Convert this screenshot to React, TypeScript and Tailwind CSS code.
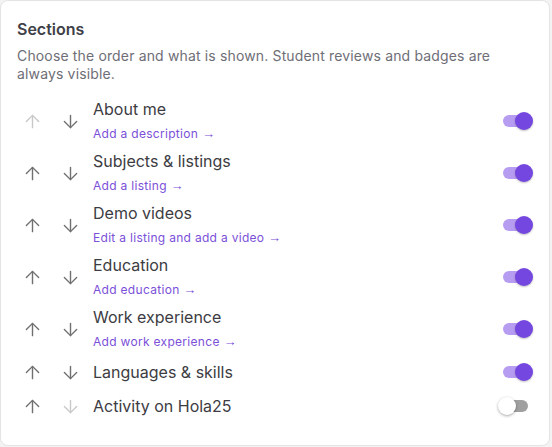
import { ArrowUp, ArrowDown } from 'lucide-react';

type Section = {
  title: string;
  link?: string;
  on: boolean;
};

const sections: Section[] = [
  { title: 'About me', link: 'Add a description', on: true },
  { title: 'Subjects & listings', link: 'Add a listing', on: true },
  { title: 'Demo videos', link: 'Edit a listing and add a video', on: true },
  { title: 'Education', link: 'Add education', on: true },
  { title: 'Work experience', link: 'Add work experience', on: true },
  { title: 'Languages & skills', on: true },
  { title: 'Activity on Hola25', on: false },
];

const Toggle = ({ on }: { on: boolean }) => (
  <div className="relative w-[28px] h-[12px] mr-[2px]">
    <div className={`absolute inset-0 rounded-full ${on ? 'bg-[#b79df1]' : 'bg-[#a0a0a0] right-[3px]'}`} />
    <div
      className={`absolute top-[-3px] w-[18px] h-[18px] rounded-full ${
        on
          ? 'left-[12px] bg-[#7447e0] shadow-[0_1px_2px_rgba(0,0,0,0.25)]'
          : 'left-[-5px] bg-white shadow-[0_1px_3px_rgba(0,0,0,0.35)]'
      }`}
    />
  </div>
);

export default function App() {
  return (
    <div className="min-h-screen bg-[#f3f3f4] font-['Inter',sans-serif]">
      <div className="w-[550px] h-[446px] bg-white border border-[#e4e4e7] rounded-lg p-4">
        <h2 className="text-base leading-6 font-semibold text-[#3f3f48]">Sections</h2>
        <p className="mt-[6px] text-sm leading-[18px] tracking-[0.15px] text-[#6e6e76]">
          Choose the order and what is shown. Student reviews and badges are always visible.
        </p>

        <div className="mt-[12px]">
          {sections.map((s, i) => (
            <div key={s.title} className={`flex items-center ${s.link ? 'h-[52px]' : 'h-[34px]'}`}>
              <button className="w-[30px] h-[26px] flex items-center justify-center">
                <ArrowUp size={21} strokeWidth={1.6} className={i === 0 ? 'text-[#c8c8c8]' : 'text-[#707070]'} />
              </button>
              <button className="ml-[8px] w-[30px] h-[26px] flex items-center justify-center">
                <ArrowDown
                  size={21}
                  strokeWidth={1.6}
                  className={i === sections.length - 1 ? 'text-[#c8c8c8]' : 'text-[#707070]'}
                />
              </button>
              <div className={`ml-[8px] flex-1 ${s.link ? 'pb-[2px]' : ''}`}>
                <div className="text-base leading-6 text-[#3c3c42]">{s.title}</div>
                {s.link && (
                  <a className="block mt-1 text-xs leading-[18px] text-[#7b4fd8] tracking-[0.3px]">
                    {s.link} <span className="font-['Liberation_Sans',sans-serif] text-[13px]">→</span>
                  </a>
                )}
              </div>
              <Toggle on={s.on} />
            </div>
          ))}
        </div>
      </div>
    </div>
  );
}
